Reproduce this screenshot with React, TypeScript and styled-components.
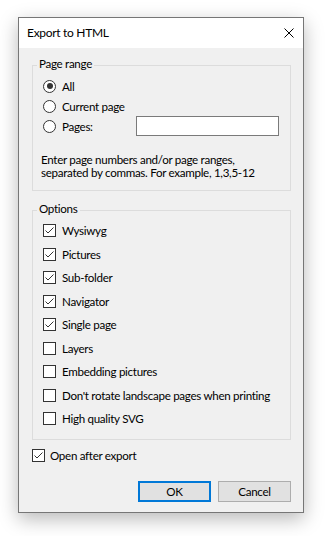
import React from "react";
import styled, { createGlobalStyle } from "styled-components";

const GlobalStyle = createGlobalStyle`
  html, body {
    margin: 0;
    padding: 0;
    background: #ffffff;
  }
  body {
    font-family: Lato, "Segoe UI", "Liberation Sans", sans-serif;
    font-size: 11.6px;
    letter-spacing: -0.3px;
    color: #000000;
  }
`;

const Page = styled.div`
  width: 326px;
  height: 536px;
  box-sizing: border-box;
  padding: 17px 0 0 18px;
`;

const Window = styled.div`
  width: 286px;
  height: 496px;
  box-sizing: border-box;
  border: 1px solid #767676;
  background: #f0f0f0;
  box-shadow: 0 6px 18px rgba(0, 0, 0, 0.28);
  display: flex;
  flex-direction: column;
`;

const TitleBar = styled.div`
  height: 30px;
  flex: none;
  background: #ffffff;
  display: flex;
  align-items: center;
  justify-content: space-between;
  padding: 0 9px 0 8px;
`;

const Title = styled.span`
  font-size: 12px;
  line-height: 16px;
`;

const Body = styled.div`
  flex: 1;
  display: flex;
  flex-direction: column;
  padding: 9px 12px 10px 13px;
`;

const Group = styled.fieldset<{ $gap?: number }>`
  margin: ${(p) => p.$gap ?? 0}px 0 0;
  padding: 0;
  border: 1px solid #dcdcdc;
  min-width: 0;
`;

const Legend = styled.legend`
  margin-left: 4px;
  padding: 0 2px 3px;
  line-height: 13px;
`;

const GroupBody = styled.div<{ $top: number; $bottom: number }>`
  display: flex;
  flex-direction: column;
  padding: ${(p) => p.$top}px 11px ${(p) => p.$bottom}px 10px;
`;

const Row = styled.label<{ $h: number }>`
  height: ${(p) => p.$h}px;
  display: flex;
  align-items: center;
  gap: 6px;
  white-space: nowrap;
`;

const RadioCircle = styled.span`
  width: 13px;
  height: 13px;
  box-sizing: border-box;
  border-radius: 50%;
  border: 1px solid #333333;
  background: #ffffff;
  display: flex;
  align-items: center;
  justify-content: center;
  flex: none;
`;

const RadioDot = styled.span`
  width: 6px;
  height: 6px;
  border-radius: 50%;
  background: #333333;
`;

const Box = styled.span`
  width: 13px;
  height: 13px;
  box-sizing: border-box;
  border: 1px solid #333333;
  background: #ffffff;
  display: flex;
  align-items: center;
  justify-content: center;
  flex: none;
`;

const PagesInput = styled.span`
  margin-left: auto;
  width: 143px;
  height: 20px;
  box-sizing: border-box;
  border: 1px solid #7a7a7a;
  background: #ffffff;
`;

const Hint = styled.p`
  margin: 17px 0 0 -2px;
  line-height: 13px;
  white-space: nowrap;
`;

const FooterCheck = styled(Row)`
  margin-top: 6px;
  gap: 5px;
`;

const Buttons = styled.div`
  margin-top: 15px;
  display: flex;
  justify-content: flex-end;
  gap: 7px;
`;

const Button = styled.button<{ $default?: boolean }>`
  width: 73px;
  height: 21px;
  box-sizing: border-box;
  margin: 0;
  padding: 0;
  font: inherit;
  letter-spacing: inherit;
  color: #000000;
  background: #e1e1e1;
  border: ${(p) => (p.$default ? "2px solid #0078d7" : "1px solid #adadad")};
`;

const CloseIcon = () => (
  <svg width="10" height="10" viewBox="0 0 10 10">
    <path d="M0.5 0.5 L9.5 9.5 M9.5 0.5 L0.5 9.5" stroke="#000" strokeWidth="1" fill="none" />
  </svg>
);

const Radio = ({ checked }: { checked?: boolean }) => (
  <RadioCircle>{checked ? <RadioDot /> : null}</RadioCircle>
);

const Check = ({ checked }: { checked?: boolean }) => (
  <Box>
    {checked ? (
      <svg width="11" height="11" viewBox="0 0 11 11">
        <path d="M1.5 5.5 L4 8 L9.5 2.5" stroke="#333" strokeWidth="1" fill="none" />
      </svg>
    ) : null}
  </Box>
);

const options: { label: string; checked: boolean }[] = [
  { label: "Wysiwyg", checked: true },
  { label: "Pictures", checked: true },
  { label: "Sub-folder", checked: true },
  { label: "Navigator", checked: true },
  { label: "Single page", checked: true },
  { label: "Layers", checked: false },
  { label: "Embedding pictures", checked: false },
  { label: "Don't rotate landscape pages when printing", checked: false },
  { label: "High quality SVG", checked: false },
];

const App: React.FC = () => {
  return (
    <>
      <GlobalStyle />
      <Page>
        <Window>
          <TitleBar>
            <Title>Export to HTML</Title>
            <CloseIcon />
          </TitleBar>
          <Body>
            <Group>
              <Legend>Page range</Legend>
              <GroupBody $top={3} $bottom={11}>
                <Row $h={20}>
                  <Radio checked />
                  All
                </Row>
                <Row $h={20}>
                  <Radio />
                  Current page
                </Row>
                <Row $h={20}>
                  <Radio />
                  Pages:
                  <PagesInput />
                </Row>
                <Hint>
                  Enter page numbers and/or page ranges,
                  <br />
                  separated by commas. For example, 1,3,5-12
                </Hint>
              </GroupBody>
            </Group>
            <Group $gap={11}>
              <Legend>Options</Legend>
              <GroupBody $top={1} $bottom={8}>
                {options.map((o) => (
                  <Row $h={23.5} key={o.label}>
                    <Check checked={o.checked} />
                    {o.label}
                  </Row>
                ))}
              </GroupBody>
            </Group>
            <FooterCheck $h={20}>
              <Check checked />
              Open after export
            </FooterCheck>
            <Buttons>
              <Button $default>OK</Button>
              <Button>Cancel</Button>
            </Buttons>
          </Body>
        </Window>
      </Page>
    </>
  );
};

export default App;
